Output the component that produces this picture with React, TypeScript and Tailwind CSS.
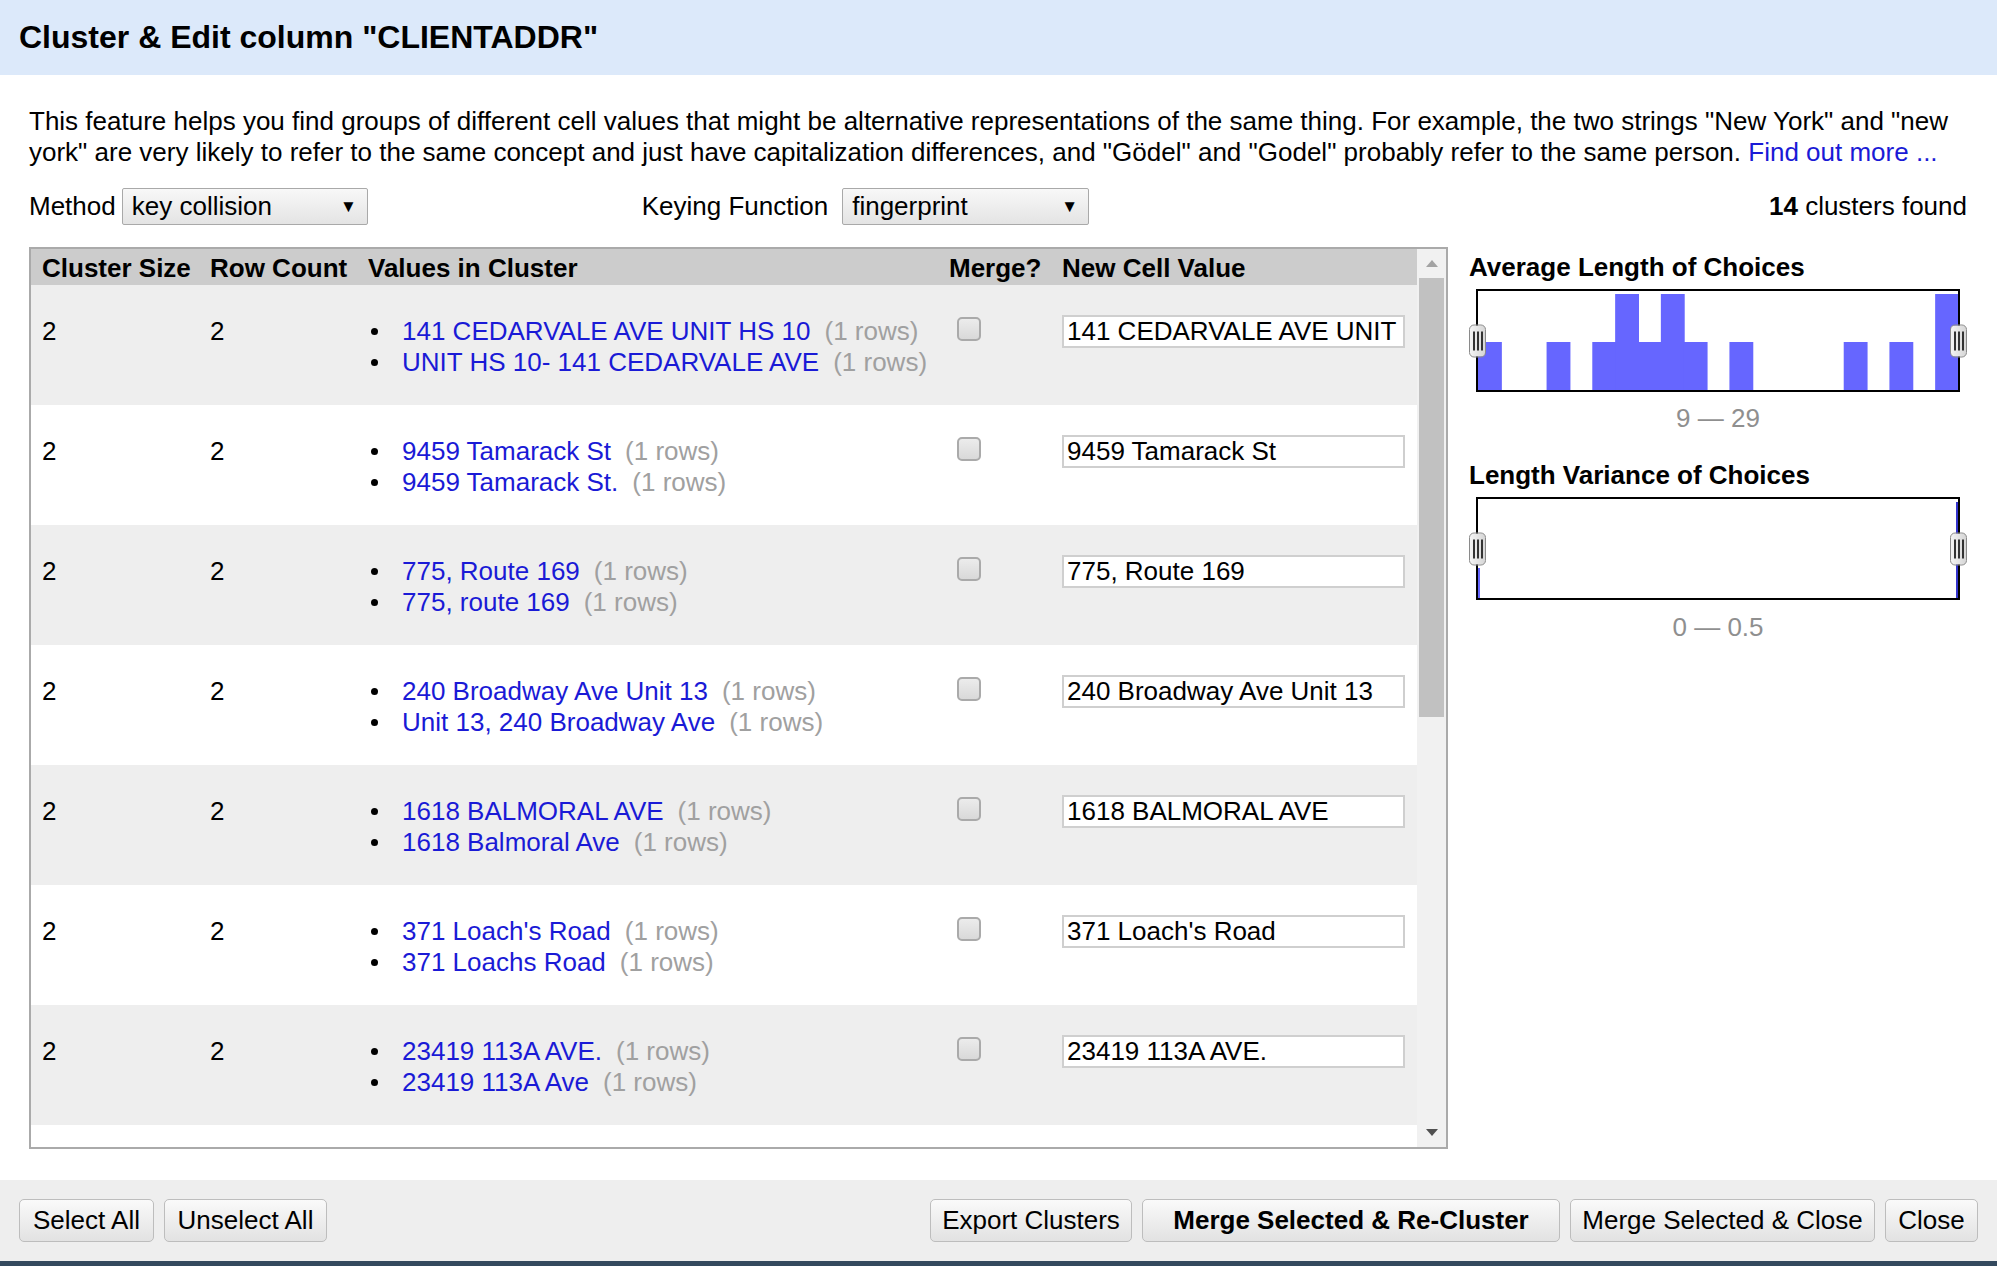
import React from 'react'

type Cluster = { values: string[]; value: string }

const CLUSTERS: Cluster[] = [
  { values: ['141 CEDARVALE AVE UNIT HS 10', 'UNIT HS 10- 141 CEDARVALE AVE'], value: '141 CEDARVALE AVE UNIT HS 10' },
  { values: ['9459 Tamarack St', '9459 Tamarack St.'], value: '9459 Tamarack St' },
  { values: ['775, Route 169', '775, route 169'], value: '775, Route 169' },
  { values: ['240 Broadway Ave Unit 13', 'Unit 13, 240 Broadway Ave'], value: '240 Broadway Ave Unit 13' },
  { values: ['1618 BALMORAL AVE', '1618 Balmoral Ave'], value: '1618 BALMORAL AVE' },
  { values: ["371 Loach's Road", '371 Loachs Road'], value: "371 Loach's Road" },
  { values: ['23419 113A AVE.', '23419 113A Ave'], value: '23419 113A AVE.' },
]

// 21 bins over 9..29, count per bin
const BINS: Record<number, number> = { 0: 1, 3: 1, 5: 1, 6: 2, 7: 1, 8: 2, 9: 1, 11: 1, 16: 1, 18: 1, 20: 2 }

const COLS = 'grid grid-cols-[168px_158px_581px_113px_1fr]'

function Handle({ side }: { side: 'l' | 'r' }) {
  return (
    <div
      className={
        'absolute top-1/2 -translate-y-1/2 w-[17px] h-[33px] rounded-[5px] border border-[#8a8a8a] bg-gradient-to-r from-[#f4f4f4] to-[#d6d6d6] flex items-center justify-center gap-[2px] ' +
        (side === 'l' ? '-left-[9px]' : '-right-[9px]')
      }
    >
      <span className="w-[2px] h-[19px] bg-[#333]" />
      <span className="w-[2px] h-[19px] bg-[#333]" />
      <span className="w-[2px] h-[19px] bg-[#333]" />
    </div>
  )
}

function Histogram() {
  const w = 480
  const h = 99
  const bw = w / 21
  return (
    <div className="relative w-[484px] h-[103px] border-2 border-black bg-white">
      <svg width={w} height={h} className="block">
        {Object.entries(BINS).map(([i, c]) => {
          const bh = c === 2 ? h - 3 : (h - 3) / 2
          return <rect key={i} x={Number(i) * bw} y={h - bh} width={bw + 1} height={bh} fill="#6666ff" />
        })}
      </svg>
      <Handle side="l" />
      <Handle side="r" />
    </div>
  )
}

function EmptyChart() {
  return (
    <div className="relative w-[484px] h-[103px] border-2 border-black bg-white">
      <div className="absolute left-0 bottom-0 w-[2px] h-[30px] bg-[#6666ff]" />
      <div className="absolute right-0 top-[3px] bottom-0 w-[2px] bg-[#3333cc]" />
      <Handle side="l" />
      <Handle side="r" />
    </div>
  )
}

function Select({ label, width }: { label: string; width: string }) {
  return (
    <div
      className={
        'h-[37px] border border-[#a9a9a9] rounded-[2px] bg-gradient-to-b from-[#f8f8f8] to-[#e4e4e4] flex items-center justify-between pl-[9px] pr-[10px] ' +
        width
      }
    >
      <span>{label}</span>
      <span className="text-[17px]">▼</span>
    </div>
  )
}

function Button({ children, w, bold }: { children: React.ReactNode; w: string; bold?: boolean }) {
  return (
    <button
      className={
        'h-[43px] border border-[#bdbdbd] rounded-[5px] bg-gradient-to-b from-[#fafafa] to-[#e2e2e2] text-[26px] text-black flex items-center justify-center ' +
        w +
        (bold ? ' font-bold' : '')
      }
    >
      {children}
    </button>
  )
}

export default function App() {
  return (
    <div
      className="w-[1997px] h-[1266px] flex flex-col bg-white text-black text-[26px] overflow-hidden"
      style={{ fontFamily: '"Liberation Sans", Arial, sans-serif' }}
    >
      <div className="h-[75px] bg-[#dce9fa] px-[19px] flex items-center">
        <h1 className="text-[32px] font-bold -mt-[2px]">Cluster &amp; Edit column "CLIENTADDR"</h1>
      </div>

      <div className="flex-1 px-[29px] pt-[31px] flex flex-col">
        <p className="leading-[31px]">
          This feature helps you find groups of different cell values that might be alternative representations of the
          same thing. For example, the two strings "New York" and "new york" are very likely to refer to the same concept
          and just have capitalization differences, and "Gödel" and "Godel" probably refer to the same person.{' '}
          <span className="text-[#1a1ad6]">Find out more ...</span>
        </p>

        <div className="mt-[20px] flex items-center h-[37px]">
          <span className="mr-[6px]">Method</span>
          <Select label="key collision" width="w-[246px]" />
          <span className="ml-[274px] mr-[14px]">Keying Function</span>
          <Select label="fingerprint" width="w-[247px]" />
          <span className="ml-auto mr-[1px]">
            <b>14</b> clusters found
          </span>
        </div>

        <div className="mt-[22px] flex gap-[21px]">
          <div className="w-[1419px] h-[902px] border-2 border-[#aaa] flex">
            <div className="flex-1 overflow-hidden bg-white">
              <div className={COLS + ' h-[36px] bg-[#cccccc] font-bold items-center'}>
                <div className="pl-[11px]">Cluster Size</div>
                <div className="pl-[11px]">Row Count</div>
                <div className="pl-[11px]">Values in Cluster</div>
                <div className="pl-[11px]">Merge?</div>
                <div className="pl-[11px]">New Cell Value</div>
              </div>
              {CLUSTERS.map((c, i) => (
                <div key={i} className={COLS + ' h-[120px] leading-[31px] pt-[31px] ' + (i % 2 === 0 ? 'bg-[#eeeeee]' : 'bg-white')}>
                  <div className="pl-[11px]">2</div>
                  <div className="pl-[11px]">2</div>
                  <ul className="pl-[14px]">
                    {c.values.map(v => (
                      <li key={v} className="flex items-center">
                        <span className="w-[7px] h-[7px] rounded-full bg-black mr-[24px]" />
                        <span className="text-[#1a1ad6]">{v}</span>
                        <span className="text-[#a0a0a0] ml-[14px]">(1 rows)</span>
                      </li>
                    ))}
                  </ul>
                  <div className="pl-[19px] pt-[1px]">
                    <span className="block w-[24px] h-[24px] rounded-[5px] border-2 border-[#aaa] bg-gradient-to-b from-[#ececec] to-[#d9d9d9]" />
                  </div>
                  <div className="pl-[11px] -mt-[1px]">
                    <input
                      readOnly
                      value={c.value}
                      className="w-[343px] h-[33px] border-2 border-[#cfcfcf] bg-white px-[3px] outline-none"
                    />
                  </div>
                </div>
              ))}
            </div>
            <div className="w-[29px] bg-[#f1f1f1] flex flex-col items-center">
              <div className="h-[29px] flex items-center justify-center">
                <span className="w-0 h-0 border-x-[6px] border-x-transparent border-b-[7px] border-b-[#a3a3a3]" />
              </div>
              <div className="w-[25px] h-[439px] bg-[#c1c1c1]" />
              <div className="flex-1" />
              <div className="h-[29px] flex items-center justify-center">
                <span className="w-0 h-0 border-x-[6px] border-x-transparent border-t-[7px] border-t-[#505050]" />
              </div>
            </div>
          </div>

          <div className="flex flex-col">
            <h3 className="font-bold leading-[30px] mt-[5px]">Average Length of Choices</h3>
            <div className="ml-[7px] mt-[7px]">
              <Histogram />
            </div>
            <div className="ml-[7px] w-[484px] text-center text-[#8f8f8f] mt-[11px] leading-[30px]">9 — 29</div>
            <h3 className="font-bold leading-[30px] mt-[27px]">Length Variance of Choices</h3>
            <div className="ml-[7px] mt-[7px]">
              <EmptyChart />
            </div>
            <div className="ml-[7px] w-[484px] text-center text-[#8f8f8f] mt-[12px] leading-[30px]">0 — 0.5</div>
          </div>
        </div>
      </div>

      <div className="h-[81px] bg-[#eeeeee] px-[19px] flex items-center gap-[10px]">
        <Button w="w-[135px]">Select All</Button>
        <Button w="w-[163px]">Unselect All</Button>
        <div className="flex-1" />
        <Button w="w-[202px]">Export Clusters</Button>
        <Button w="w-[418px]" bold>
          Merge Selected &amp; Re-Cluster
        </Button>
        <Button w="w-[305px]">Merge Selected &amp; Close</Button>
        <Button w="w-[93px]">Close</Button>
      </div>
      <div className="h-[5px] bg-[#34495e]" />
    </div>
  )
}
